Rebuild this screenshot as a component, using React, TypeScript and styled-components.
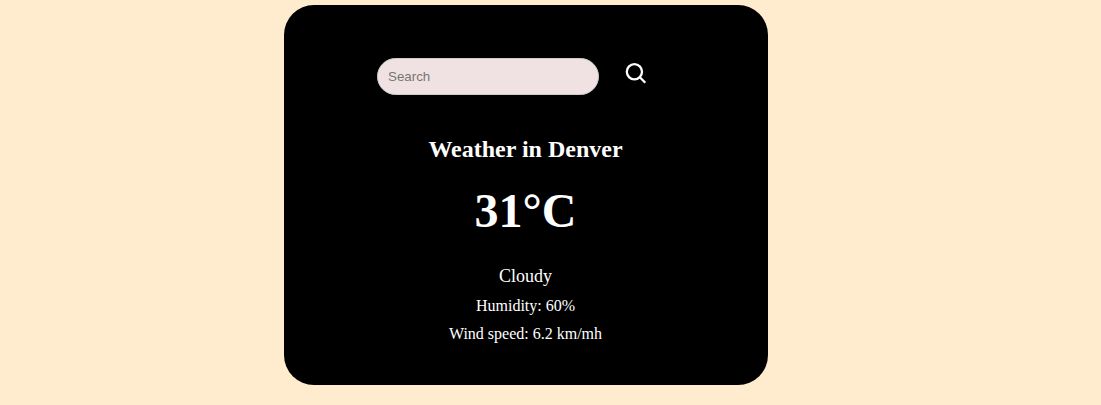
import React from "react";
import styled, { createGlobalStyle } from "styled-components";

const GlobalStyle = createGlobalStyle`
  body {
    margin: 0;
    background: blanchedalmond;
    font-family: "Liberation Serif", "Times New Roman", serif;
  }
`;

const Page = styled.main`
  box-sizing: border-box;
  height: 405px;
  padding: 5px 0 0 284px;
  overflow: hidden;
`;

const Card = styled.section`
  box-sizing: border-box;
  display: flex;
  flex-direction: column;
  align-items: center;
  width: 484px;
  height: 380px;
  padding: 53px 1px 0 0;
  border-radius: 30px;
  background: #000;
  color: #fff;
`;

const SearchBar = styled.form`
  display: flex;
  align-self: stretch;
  gap: 25px;
  padding-left: 93px;
`;

const SearchInput = styled.input`
  box-sizing: border-box;
  width: 222px;
  height: 37px;
  padding: 0 10px;
  border: 1px solid #ccc;
  border-radius: 20px;
  background: #f0e2e2;
  font: 13.333px "Liberation Sans", Arial, sans-serif;
  outline: none;

  &::placeholder {
    color: #757575;
  }
`;

const SearchButton = styled.button`
  width: 24px;
  height: 24px;
  margin-top: 3px;
  padding: 0;
  border: 0;
  background: none;
  color: #fff;

  svg {
    display: block;
  }
`;

const City = styled.h2`
  margin: 41px 0 0;
  font-size: 24px;
  line-height: 27px;
`;

const Temperature = styled.h1`
  margin: 20px 0 0;
  font-size: 48px;
  line-height: 55px;
`;

const Condition = styled.div`
  margin: 28px 0 1px;
  font-size: 18px;
  line-height: 20px;
`;

const Detail = styled.div`
  margin-top: 10px;
  font-size: 16px;
  line-height: 18px;
`;

export default function App() {
  return (
    <Page>
      <GlobalStyle />
      <Card>
        <SearchBar onSubmit={(e) => e.preventDefault()}>
          <SearchInput placeholder="Search" />
          <SearchButton aria-label="Search">
            <svg
              width="24"
              height="24"
              viewBox="0 0 24 24"
              fill="none"
              stroke="currentColor"
              strokeWidth="2.3"
            >
              <circle cx="10.4" cy="10.8" r="7.6" />
              <path d="M15.8 16.2 21.3 21.7" />
            </svg>
          </SearchButton>
        </SearchBar>
        <City>Weather in Denver</City>
        <Temperature>31°C</Temperature>
        <Condition>Cloudy</Condition>
        <Detail>Humidity: 60%</Detail>
        <Detail>Wind speed: 6.2 km/mh</Detail>
      </Card>
    </Page>
  );
}
